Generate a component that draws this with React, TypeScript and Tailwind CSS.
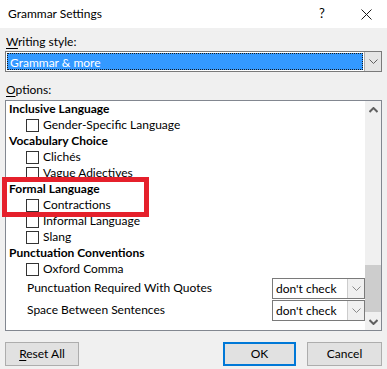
import React from "react";

type Item =
  | { kind: "head"; text: string }
  | { kind: "check"; text: string }
  | { kind: "select"; text: string };

const items: Item[] = [
  { kind: "head", text: "Inclusive Language" },
  { kind: "check", text: "Gender-Specific Language" },
  { kind: "head", text: "Vocabulary Choice" },
  { kind: "check", text: "Clichés" },
  { kind: "check", text: "Vague Adjectives" },
  { kind: "head", text: "Formal Language" },
  { kind: "check", text: "Contractions" },
  { kind: "check", text: "Informal Language" },
  { kind: "check", text: "Slang" },
  { kind: "head", text: "Punctuation Conventions" },
  { kind: "check", text: "Oxford Comma" },
  { kind: "select", text: "Punctuation Required With Quotes" },
  { kind: "select", text: "Space Between Sentences" },
];

function Chevron({ color = "#606060" }: { color?: string }) {
  return (
    <svg width="9" height="5" viewBox="0 0 9 5">
      <path d="M0.5 0.5 L4.5 4.5 L8.5 0.5" fill="none" stroke={color} strokeWidth="1" />
    </svg>
  );
}

function Arrow({ up = false }: { up?: boolean }) {
  return (
    <svg width="9" height="6" viewBox="0 0 9 6" className={up ? "" : "rotate-180"}>
      <path d="M0.5 5 L4.5 1 L8.5 5" fill="none" stroke="#606060" strokeWidth="2" />
    </svg>
  );
}

function Row({ item }: { item: Item }) {
  if (item.kind === "head") {
    return <div className="h-[16px] leading-[16px] pl-[3px] font-bold text-black">{item.text}</div>;
  }
  if (item.kind === "check") {
    return (
      <div className="h-[16px] flex items-center pl-[20px]">
        <div className="w-[13px] h-[13px] border border-[#333333] bg-white" />
        <span className="ml-[4px] leading-[16px]">{item.text}</span>
      </div>
    );
  }
  return (
    <div className="h-[22px] flex items-center pl-[21px]">
      <span className="flex-1">{item.text}</span>
      <div className="w-[93px] h-[21px] border border-[#7a7a7a] bg-white flex">
        <span className="flex-1 pl-[3px] leading-[19px]">don't check</span>
        <div className="w-[17px] border-l border-[#cccccc] bg-[#f0f0f0] flex items-center justify-center">
          <Chevron color="#8a8a8a" />
        </div>
      </div>
    </div>
  );
}

export default function App() {
  return (
    <div className="w-[387px] h-[369px] bg-[#f0f0f0] text-[12px] text-black font-['Lato',sans-serif] relative overflow-hidden">
      <div className="h-[28px] bg-white flex items-center pl-[8px]">
        <span className="flex-1">Grammar Settings</span>
        <span className="w-[10px] text-[13px] mr-[32px]">?</span>
        <svg width="11" height="11" viewBox="0 0 11 11" className="mr-[15px]">
          <path d="M0.5 0.5 L10.5 10.5 M10.5 0.5 L0.5 10.5" stroke="#1a1a1a" strokeWidth="1" />
        </svg>
      </div>

      <div className="px-[5px]">
        <div className="h-[23px] pt-[6px] pl-[1px] leading-[16px]">
          <span className="underline underline-offset-2">W</span>riting style:
        </div>
        <div className="h-[21px] border border-[#7a7a7a] bg-white flex">
          <div className="flex-1 m-[1px] bg-[#3399ff] text-white leading-[17px] pl-[2px] border border-dotted border-[#1a1a1a]">
            Grammar &amp; more
          </div>
          <div className="w-[17px] bg-[#e5e5e5] border-l border-[#adadad] flex items-center justify-center">
            <Chevron />
          </div>
        </div>
        <div className="h-[28px] pt-[10px] pl-[1px] leading-[16px]">
          <span className="underline underline-offset-2">O</span>ptions:
        </div>
        <div className="h-[231px] border border-[#828790] bg-white flex">
          <div className="flex-1">
            {items.map((it, i) => (
              <Row key={i} item={it} />
            ))}
          </div>
          <div className="w-[16px] bg-[#f0f0f0] flex flex-col">
            <div className="h-[17px] flex items-center justify-center">
              <Arrow up />
            </div>
            <div className="flex-1 flex flex-col">
              <div className="h-[147px]" />
              <div className="h-[47px] bg-[#cdcdcd]" />
            </div>
            <div className="h-[17px] flex items-center justify-center">
              <Arrow />
            </div>
          </div>
        </div>
        <div className="flex mt-[11px] h-[24px]">
          <button className="w-[74px] h-[24px] bg-[#e1e1e1] border border-[#adadad]">
            <span className="underline underline-offset-2">R</span>eset All
          </button>
          <div className="flex-1" />
          <button className="w-[73px] h-[24px] bg-[#e1e1e1] border-2 border-[#0078d7]">OK</button>
          <button className="w-[75px] h-[24px] ml-[11px] bg-[#e1e1e1] border border-[#adadad]">Cancel</button>
        </div>
      </div>

      <div className="absolute left-[2px] top-[177px] w-[147px] h-[40px] border-[5px] border-[#e5202b]" />
    </div>
  );
}
